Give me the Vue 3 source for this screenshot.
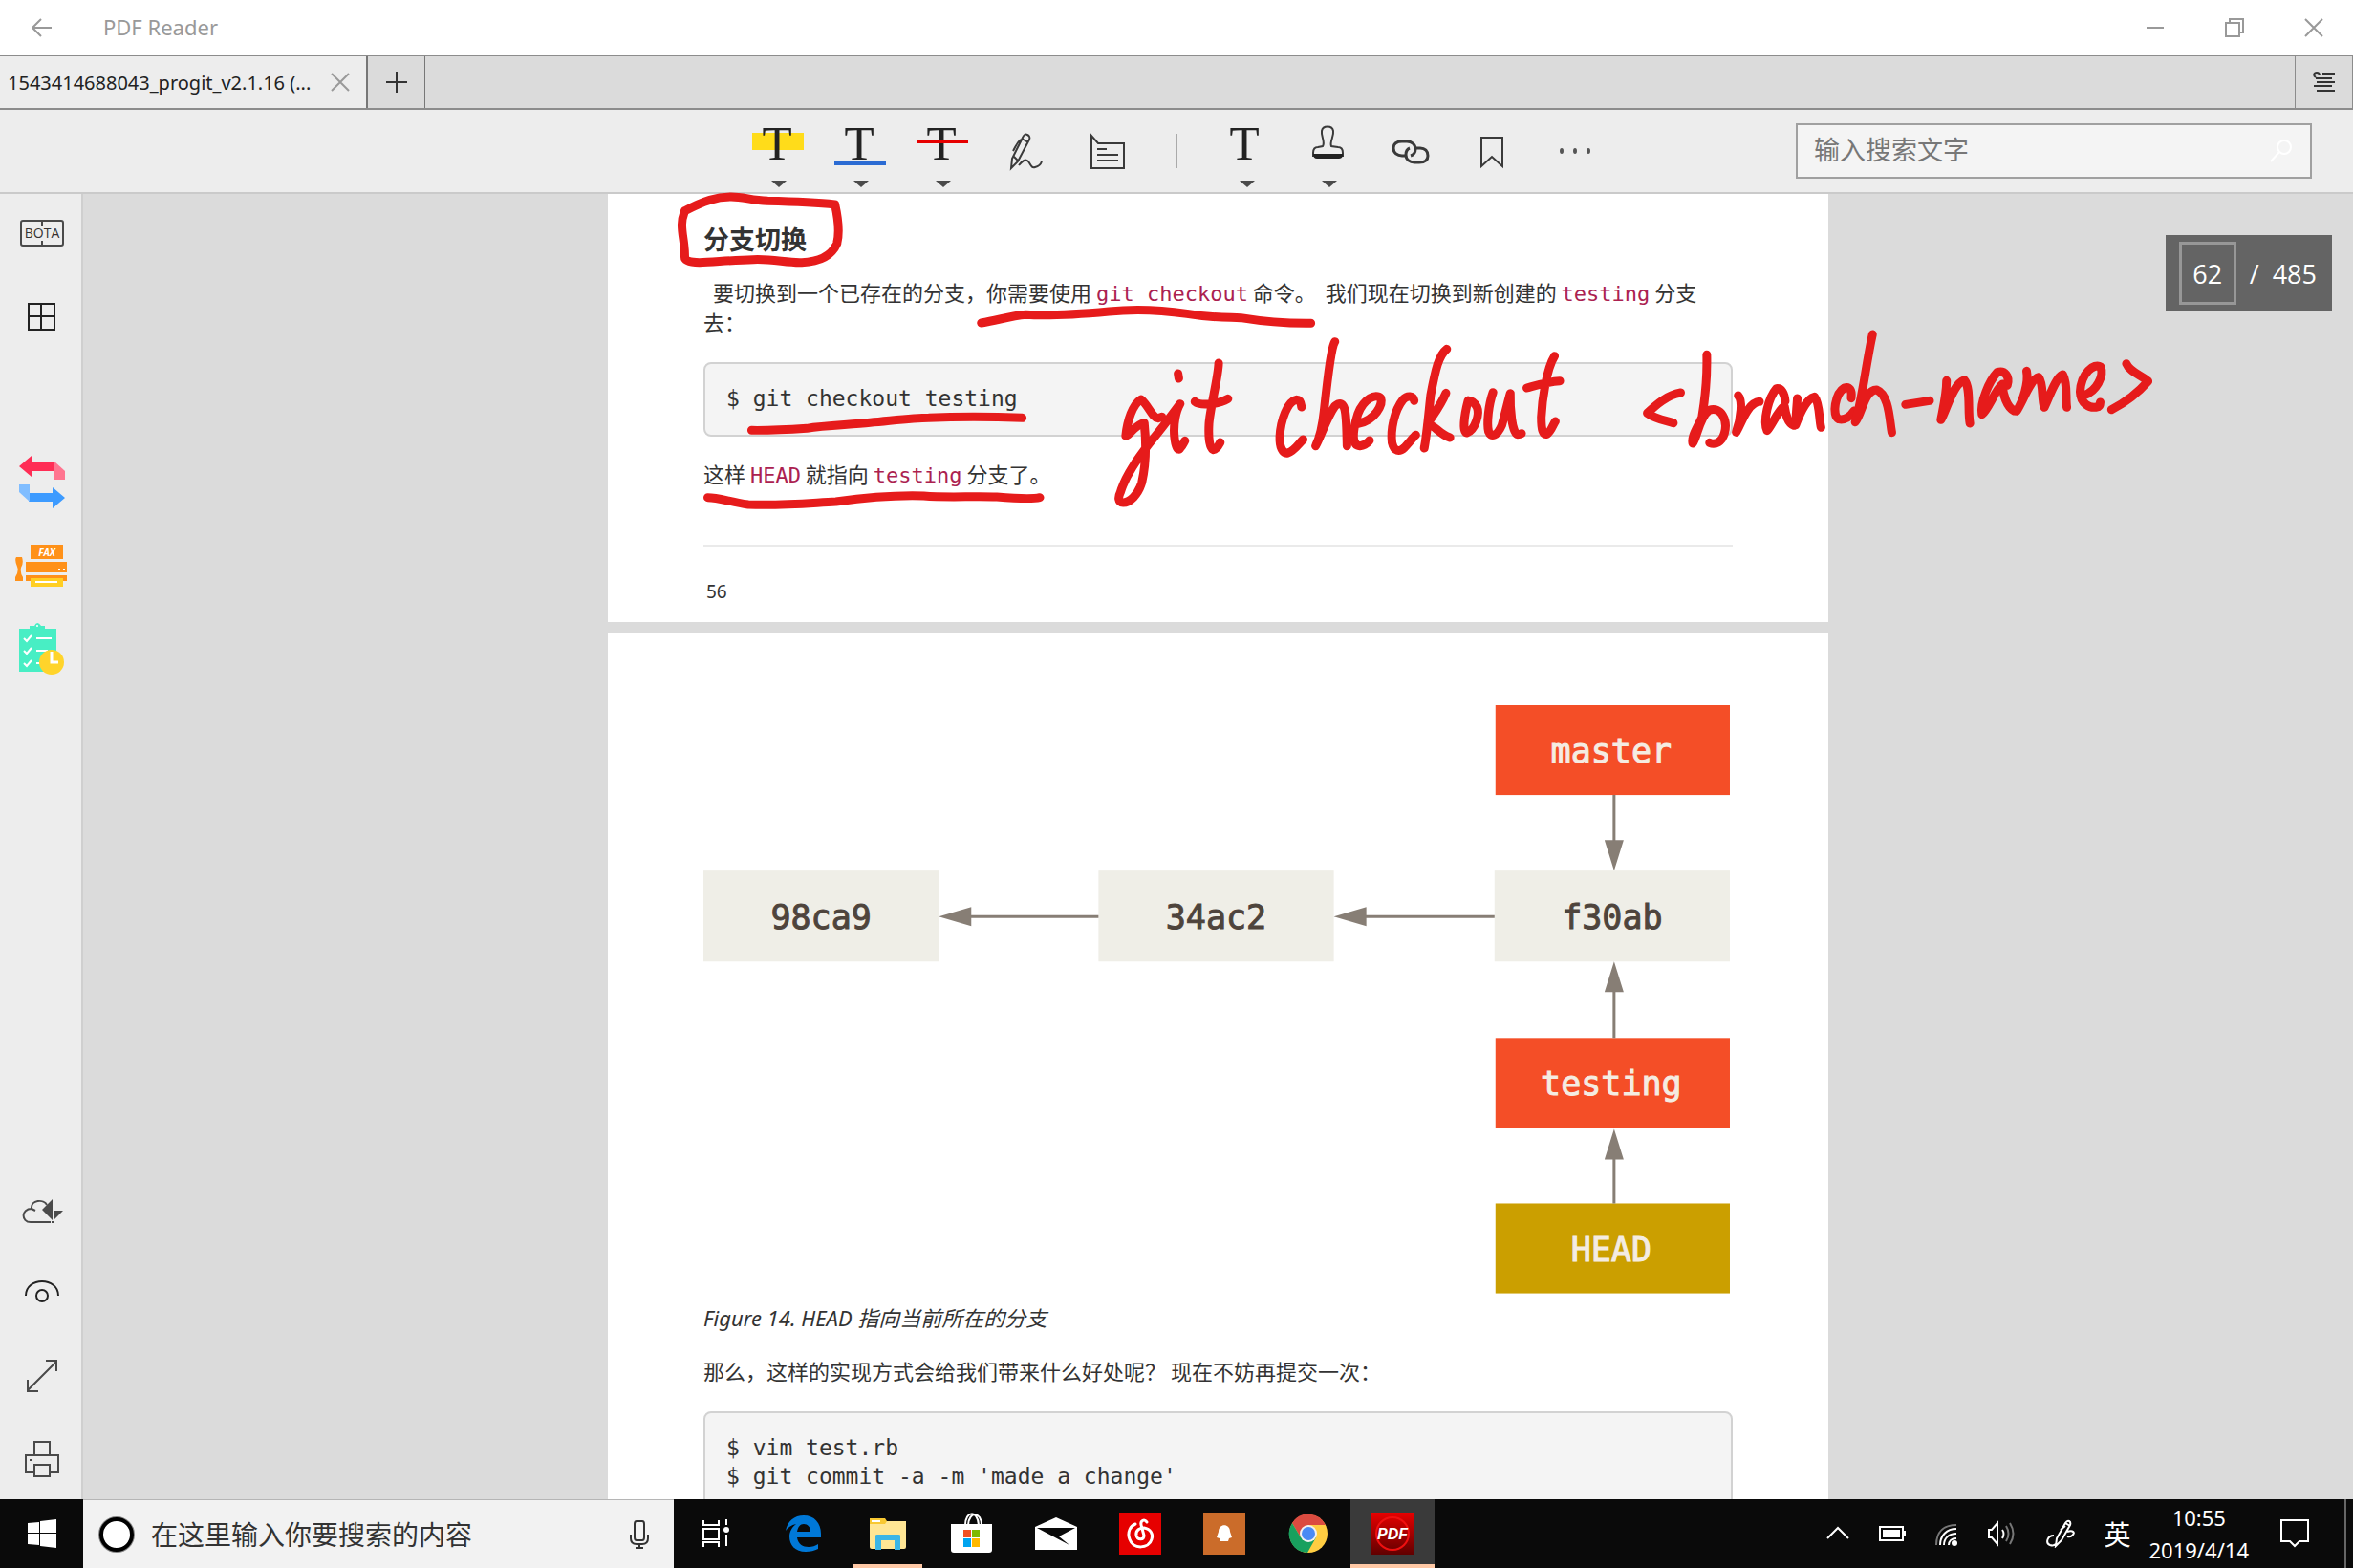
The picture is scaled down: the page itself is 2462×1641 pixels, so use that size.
<script setup>
import { ref } from 'vue'

const query = ref('')
const desktopQuery = ref('')
const pageNumber = ref('62')

const commits = [
  { id: '98ca9', x: 0 },
  { id: '34ac2', x: 413 },
  { id: 'f30ab', x: 827 },
]
const refs = [
  { name: 'master', y: 0, fill: '#f44e27' },
  { name: 'testing', y: 348, fill: '#f44e27' },
  { name: 'HEAD', y: 521, fill: '#cb9f00' },
]
</script>

<template>
  <div class="screen">
    <header class="titlebar">
      <button class="back" aria-label="Back">
        <svg width="22" height="20" viewBox="0 0 22 20"><path d="M1 10H21M10 1L1 10L10 19" /></svg>
      </button>
      <h1>PDF Reader</h1>
      <div class="window-buttons">
        <button aria-label="Minimize"><svg width="20" height="20" viewBox="0 0 20 20"><path d="M1 10H19" /></svg></button>
        <button aria-label="Restore"><svg width="20" height="20" viewBox="0 0 20 20"><path d="M1 5H15V19H1ZM5 5V1H19V15H15" /></svg></button>
        <button aria-label="Close"><svg width="20" height="20" viewBox="0 0 20 20"><path d="M1 1L19 19M19 1L1 19" /></svg></button>
      </div>
    </header>

    <nav class="tabs">
      <div class="tab">
        <span>1543414688043_progit_v2.1.16 (...</span>
        <button aria-label="Close tab"><svg width="20" height="20" viewBox="0 0 20 20"><path d="M1 1L19 19M19 1L1 19" /></svg></button>
      </div>
      <button class="new-tab" aria-label="New tab"><svg width="22" height="22" viewBox="0 0 22 22"><path d="M0 11H22M11 0V22" /></svg></button>
      <button class="tab-menu" aria-label="Tab menu">
        <svg width="24" height="22" viewBox="0 0 24 22"><path d="M3 6C0 4 1 1 4 1C6 1 7 2 7 4M10 2H23M3 7H20M4 11H23M1 15H20M4 20H23" /></svg>
      </button>
    </nav>

    <div class="toolbar">
      <div></div>
      <div class="tools">
        <button aria-label="Highlight">
          <svg viewBox="0 0 86 86"><rect x="16" y="24" width="54" height="18" fill="#ffdc1a" /><text x="42" y="52">T</text><path class="caret" d="M36 74H52L44 81Z" /></svg>
        </button>
        <button aria-label="Underline">
          <svg viewBox="0 0 86 86"><text x="42" y="52">T</text><rect x="16" y="54" width="54" height="4" fill="#2b6bd3" /><path class="caret" d="M36 74H52L44 81Z" /></svg>
        </button>
        <button aria-label="Strikethrough">
          <svg viewBox="0 0 86 86"><text x="42" y="52">T</text><rect x="16" y="31" width="54" height="4" fill="#e60000" /><path class="caret" d="M36 74H52L44 81Z" /></svg>
        </button>
        <button aria-label="Freehand">
          <svg viewBox="0 0 86 86"><path class="ico" d="M29 61L30 51L41 29C42 26 44 25 46 26C48 27 49 29 48 31L36 54L29 61ZM40 30L47 34M32 49L36 53M39 31C35 34 34 38 31 43M37 58C41 53 44 51 47 54C50 58 50 61 54 60C58 59 60 57 61 54" /></svg>
        </button>
        <button aria-label="Note">
          <svg viewBox="0 0 86 86"><path class="ico" d="M27 61V27L34 35H61V61ZM33 41H43M33 47H55M33 53H55" /></svg>
        </button>
        <span class="rule"></span>
        <button aria-label="Text box">
          <svg viewBox="0 0 86 86"><text x="41" y="52">T</text><path class="caret" d="M36 74H52L44 81Z" /></svg>
        </button>
        <button aria-label="Stamp">
          <svg viewBox="0 0 86 86"><path class="ico" d="M37 38C40 33 35 28 36 22C37 16 47 16 48 22C49 28 44 33 46 38L53 39C56 39 58 41 58 45V48H27V45C27 41 29 39 32 39Z" /><path fill="#222" d="M27 46H58V48Q57 51 54 51H31Q27 51 27 46Z" /><path class="caret" d="M36 74H52L44 81Z" /></svg>
        </button>
        <button aria-label="Link">
          <svg viewBox="0 0 86 86"><g class="ico link"><path d="M38 48H34C29 48 25 45 25 40S29 33 34 33H39C44 33 48 36 48 41C48 44 46 47 43 48" /><path d="M48 40H53C58 40 61 43 61 48S57 55 52 55H47C42 55 38 52 38 47C38 44 39 41 42 40" /></g></svg>
        </button>
        <button aria-label="Bookmark">
          <svg viewBox="0 0 86 86"><path class="ico" d="M31 29H53V59L42 49L31 59Z" /></svg>
        </button>
        <button aria-label="More">
          <svg viewBox="0 0 86 86"><g fill="#555"><ellipse cx="29" cy="43" rx="2" ry="3" /><ellipse cx="43" cy="43" rx="2" ry="3" /><ellipse cx="57" cy="43" rx="2" ry="3" /></g></svg>
        </button>
      </div>
      <label class="search">
        <input v-model="query" type="text" aria-label="输入搜索文字" placeholder="输入搜索文字" />
        <svg width="24" height="24" viewBox="0 0 24 24"><circle cx="15" cy="8" r="7" /><path d="M10 13L1 23" /></svg>
      </label>
    </div>

    <div class="workspace">
      <aside class="sidebar">
        <div class="side-group">
          <button aria-label="BOTA">
            <svg width="46" height="56" viewBox="0 0 46 56"><path class="thin" d="M3 15H43Q45 15 45 17V39Q45 41 43 41H3Q1 41 1 39V17Q1 15 3 15ZM23 15V20M23 36V41" /><text x="23" y="33">BOTA</text></svg>
          </button>
          <button aria-label="Thumbnails">
            <svg width="30" height="56" viewBox="0 0 30 56"><path class="thin bold" d="M1 15H28V42H1ZM14 15V42M1 28H28" /></svg>
          </button>
        </div>
        <div class="side-group colored">
          <button aria-label="Convert">
            <svg width="48" height="56" viewBox="0 0 48 56">
              <path fill="#ff2d55" d="M0 11L13 0V6H37L41 16H13V22Z" /><path fill="#ff7590" d="M37 6L48 16V25H37Z" />
              <path fill="#3d9bff" d="M48 44L35 33V39H10V48H35V55Z" /><path fill="#80bdff" d="M0 30H11V48L0 38Z" />
            </svg>
          </button>
          <button aria-label="Fax">
            <svg width="56" height="56" viewBox="0 0 56 56">
              <path fill="#ff9119" d="M16 6H50V21H16ZM11 24H54V35H11ZM11 38H54V44H11ZM1 19H7Q9 25 6 30Q5 36 8 40V44H0V40Q4 34 2 29Q-1 22 1 19Z" />
              <path fill="#ffcf24" d="M16 41H50V50H16Z" /><path stroke="#fff" stroke-width="2" d="M21 45H44M45 32H47M50 32H52" />
              <text x="33" y="18" class="fax">FAX</text>
            </svg>
          </button>
          <button aria-label="Tasks">
            <svg width="48" height="56" viewBox="0 0 48 56">
              <path fill="#48eec4" d="M0 7H11V4H16Q19-2 23 4H27V7H39V52H0Z" /><circle cx="19" cy="4" r="1" fill="#fff" />
              <path fill="none" stroke="#fff" stroke-width="2" d="M5 17L8 20L13 14M5 30L8 33L13 27M5 43L8 46L13 40M18 17H34M18 30H30M18 43H24" />
              <circle cx="34" cy="42" r="13" fill="#ffd42b" /><path fill="none" stroke="#fff" stroke-width="3" d="M34 31V42H41" />
            </svg>
          </button>
        </div>
        <div class="side-group bottom">
          <button aria-label="Cloud">
            <svg width="44" height="44" viewBox="0 0 44 44"><path class="thin" d="M31 35H10C0 35 0 21 11 21C10 11 24 11 27 17M11 21L15 23" /><path fill="#4a4a4a" d="M22 22L33 11V33ZM34 23H44L34 33ZM32 34H35V36H32Z" /></svg>
          </button>
          <button aria-label="View">
            <svg width="38" height="44" viewBox="0 0 38 44"><path class="thin bold" d="M2 25C2 5 36 5 36 25" /><circle class="thin bold" cx="19" cy="25" r="6" /></svg>
          </button>
          <button aria-label="Full screen">
            <svg width="34" height="44" viewBox="0 0 34 44"><path class="thin" d="M2 37L32 7M21 6H32V17M2 26V38H13" /></svg>
          </button>
          <button aria-label="Print">
            <svg width="38" height="44" viewBox="0 0 38 44"><path class="thin" d="M11 18V4H27V18M10 36H2V18H36V36H28M11 28H27V40H11ZM6 23H8" /></svg>
          </button>
        </div>
      </aside>

      <main class="viewer">
        <article class="sheet first">
          <h2>分支切换</h2>
          <p class="lead">要切换到一个已存在的分支，你需要使用 <code>git checkout</code> 命令。&nbsp; 我们现在切换到新创建的 <code>testing</code> 分支<br />去：</p>
          <pre>$ git checkout testing</pre>
          <p>这样 <code>HEAD</code> 就指向 <code>testing</code> 分支了。</p>
          <footer>56</footer>

          <svg class="ink" viewBox="0 0 1277 448" role="img" aria-label="git checkout &lt;branch-name&gt;">
            <svg x="4" y="-3" width="800" height="460" viewBox="0 0 1568 1380" preserveAspectRatio="none">
              <path d="M150 62C190 30 215 18 245 18C270 18 285 28 320 31C370 33 420 36 458 42C465 90 468 130 462 165C452 200 430 222 390 224C360 226 330 212 290 215C250 217 210 222 180 224C160 224 150 218 150 208C150 160 144 140 144 105C144 85 147 75 150 62" />
              <path d="M758 414C800 402 820 392 850 388C900 393 970 385 1020 378C1080 368 1130 374 1180 385C1230 398 1260 396 1290 398C1330 408 1380 416 1434 415" />
              <path d="M287 751C330 752 370 748 400 745C440 735 490 734 530 727C580 720 620 712 650 712C720 707 780 708 842 712" />
              <path d="M197 962C220 962 240 975 280 984C350 988 400 980 460 975C540 958 600 955 640 957C690 963 740 957 790 960C830 965 860 968 878 962" />
            </svg>
            <svg x="504" y="117" width="660" height="230" viewBox="0 0 1568 690" preserveAspectRatio="none">
              <path d="M180 349L170 353C155 350 145 310 128 294C107 310 94 360 90 408C97 410 115 372 136 368C142 440 140 500 130 555C120 595 100 618 84 618C70 617 71 600 77 585C90 530 120 480 150 430C180 385 215 325 225 308C215 330 208 370 211 410C213 440 220 460 226 446C232 438 234 430 237 424" />
              <path d="M220 213L222 228" />
              <path d="M321 180C320 225 300 320 297 370C295 415 298 448 308 452C318 450 322 435 325 429M262 301C275 315 320 310 344 292" />
              <path d="M527 318C525 300 522 295 514 295C492 300 475 360 473 410C472 445 480 465 493 462C508 458 522 430 531 420" />
              <path d="M610 113C600 130 590 250 583 330C578 390 570 420 562 440C575 410 590 350 610 315C640 285 638 350 640 440" />
              <path d="M668 370C710 360 730 310 724 290C712 275 682 290 667 340C652 400 652 438 672 440C688 438 692 428 696 423" />
              <path d="M807 298C805 283 790 280 779 295C757 330 748 390 752 430C757 458 770 460 783 445C795 430 805 412 811 406" />
              <path d="M888 136C868 155 860 200 848 280C842 350 838 410 832 447M886 274C870 320 850 350 840 372C860 375 865 400 896 414" />
              <path d="M941 298C930 350 927 397 938 399C958 390 971 340 963 318C955 300 947 298 941 298" />
              <path d="M1003 272C992 310 987 370 992 395C998 415 1013 410 1025 375C1035 330 1042 290 1046 275C1045 320 1050 400 1064 404C1072 404 1072 402 1074 401" />
              <path d="M1156 158C1135 200 1125 300 1123 350C1123 390 1127 406 1137 403C1148 395 1153 370 1158 363M1087 258C1110 250 1140 238 1169 236" />
            </svg>
            <svg x="1024" y="117" width="660" height="230" viewBox="0 0 1568 690" preserveAspectRatio="none">
              <path d="M234 273C200 280 172 312 151 337C170 355 195 360 216 368" />
              <path d="M299 154C300 210 295 290 287 350C275 385 260 410 264 432C275 415 280 350 305 328C335 315 352 360 343 400C337 428 320 438 306 430" />
              <path d="M377 282C388 296 385 350 372 397C385 370 400 305 430 301" />
              <path d="M494 300C492 275 485 258 472 260C452 290 438 360 449 392C460 378 475 330 492 315C495 340 500 370 516 376" />
              <path d="M524 291C522 330 520 350 520 374C530 340 545 293 567 286C580 305 578 360 583 382" />
              <path d="M658 290C661 265 653 252 641 258C618 275 609 345 627 356C643 360 654 350 665 330" />
              <path d="M711 90C695 180 685 300 668 365C685 340 690 265 721 264C753 280 753 360 759 398" />
              <path d="M793 310L853 298" />
              <path d="M895 235C895 280 885 330 881 358C895 330 910 245 939 233C956 256 947 330 953 369" />
              <path d="M1046 250C1053 220 1039 202 1021 209C1002 235 978 300 983 341C1000 325 1015 265 1034 246C1035 280 1045 318 1063 330" />
              <path d="M1094 205C1100 240 1085 300 1069 331C1085 300 1105 228 1124 224C1137 245 1130 290 1138 319C1150 290 1165 226 1184 216C1197 245 1190 290 1194 319" />
              <path d="M1237 281C1268 268 1287 220 1278 192C1262 178 1229 212 1227 270C1228 306 1250 325 1272 317C1278 313 1276 306 1277 303" />
              <path d="M1342 182C1350 207 1378 217 1396 237C1378 263 1350 297 1305 326" />
            </svg>
          </svg>
        </article>

        <article class="sheet second">
          <figure>
            <svg viewBox="0 0 1076 616">
              <g v-for="c in commits" :key="c.id">
                <rect :x="c.x" y="173" width="246" height="95" fill="#efeee7" />
                <text :x="c.x + 123" y="234" class="commit">{{ c.id }}</text>
              </g>
              <g v-for="r in refs" :key="r.name">
                <rect x="828" :y="r.y" width="245" height="94" :fill="r.fill" />
                <text x="949" :y="r.y + 60" class="branch">{{ r.name }}</text>
              </g>
              <path class="line" d="M413 221H270M827 221H685M952 94V150M952 348V295M952 521V470" />
              <path class="tip" d="M246 221L280 211V231ZM659 221L693 211V231ZM952 173L942 141H962ZM952 268L942 300H962ZM952 443L942 475H962Z" />
            </svg>
            <figcaption>Figure 14. HEAD 指向当前所在的分支</figcaption>
          </figure>
          <p>那么，这样的实现方式会给我们带来什么好处呢？ 现在不妨再提交一次：</p>
          <pre>$ vim test.rb
$ git commit -a -m 'made a change'</pre>
        </article>

        <div class="pager">
          <input v-model="pageNumber" type="text" aria-label="Page" />
          <span>/</span><span>485</span>
        </div>
      </main>
    </div>

    <footer class="taskbar">
      <button class="start" aria-label="Start">
        <svg width="30" height="30" viewBox="0 0 30 30"><path fill="#fff" d="M0 4L12 3V14H0ZM13 2L30 0V14H13ZM0 15H12V27L0 26ZM13 15H30V30L13 28Z" /></svg>
      </button>
      <label class="cortana">
        <svg width="40" height="40" viewBox="0 0 40 40"><circle cx="20" cy="20" r="18" fill="#fff" stroke="#888" stroke-width="2" /><circle cx="20" cy="20" r="16" fill="none" stroke="#000" stroke-width="4" /></svg>
        <input v-model="desktopQuery" type="text" aria-label="在这里输入你要搜索的内容" placeholder="在这里输入你要搜索的内容" />
        <svg width="20" height="30" viewBox="0 0 20 30"><path fill="none" stroke="#333" stroke-width="2" d="M7 1H13Q15 1 15 4V18Q15 21 13 21H7Q5 21 5 18V4Q5 1 7 1ZM1 15V19Q1 25 7 25H13Q19 25 19 19V15M10 25V29M6 29H14" /></svg>
      </label>
      <div class="apps">
        <button class="task-view" aria-label="Task view">
          <svg width="30" height="30" viewBox="0 0 30 30"><path fill="none" stroke="#fff" stroke-width="2" d="M2 1V6H18V1M2 10H18V21H2ZM2 29V24H18V29M26 0V6M26 16V28" /><circle cx="26" cy="11" r="3" fill="#fff" /></svg>
        </button>
        <button aria-label="Edge">
          <svg width="44" height="44" viewBox="0 0 44 44"><path fill="#0078d7" d="M3 19C5 9 12 3 22 3C33 3 40 11 40 22V26H15C16 33 21 36 27 36C31 36 34 35 37 33V38C33 40 29 41 24 41C13 41 7 34 7 25C7 20 10 15 14 12C9 13 5 16 3 19ZM15 20H29C29 15 26 12 22 12C18 12 16 15 15 20Z" /></svg>
        </button>
        <button aria-label="Explorer" class="running">
          <svg width="44" height="44" viewBox="0 0 44 44"><path fill="#ffe694" d="M3 9H41V36Q41 38 39 38H5Q3 38 3 36Z" /><path fill="#f8c832" d="M3 6H19L21 9L19 12H3Z" /><path fill="#fff" d="M5 8H14V10H5Z" /><path fill="#3bb5e6" d="M9 24Q9 23 11 23H33Q35 23 35 24V39H29V29H15V39H9Z" /></svg>
        </button>
        <button aria-label="Store">
          <svg width="44" height="44" viewBox="0 0 44 44"><path fill="#fff" d="M0 12H43V39Q43 42 40 42H3Q0 42 0 39Z" /><path fill="none" stroke="#fff" stroke-width="2" d="M15 13C15-2 28-3 29 13M18 13C19-2 32-1 32 13" /><path fill="#f25022" d="M13 18H21V26H13Z" /><path fill="#7fba00" d="M22 18H30V26H22Z" /><path fill="#00a4ef" d="M13 27H21V36H13Z" /><path fill="#ffb900" d="M22 27H30V36H22Z" /></svg>
        </button>
        <button aria-label="Mail">
          <svg width="44" height="44" viewBox="0 0 44 44"><path fill="#fff" d="M0 15L22 5L44 15V39H0Z" /><path fill="#0a0a0a" d="M2 16H42L25 25L36 34Z" /></svg>
        </button>
        <button aria-label="Music">
          <svg width="44" height="44" viewBox="0 0 44 44"><path fill="#e60000" d="M0 0H44V44H0Z" /><path fill="none" stroke="#fff" stroke-width="3" stroke-linecap="round" d="M29 10C26 6 22 9 23 13L26 24C26 29 19 29 18 24C17 18 22 16 26 16C33 17 36 23 34 28C31 38 15 39 11 28C8 20 12 14 17 12" /></svg>
        </button>
        <button aria-label="Chat">
          <svg width="44" height="44" viewBox="0 0 44 44"><path fill="#cb6c2a" d="M0 0H44V44H0Z" /><path fill="#fff" d="M16 20C16 11 28 11 28 20L30 26L27 27L26 30H18L17 27L14 26Z" /></svg>
        </button>
        <button aria-label="Chrome">
          <svg width="44" height="44" viewBox="0 0 44 44"><circle cx="22" cy="22" r="20" fill="#ffcd42" /><path fill="#db4b40" d="M5 11A20 20 0 0 1 40 13H22L14 26Z" /><path fill="#18a05e" d="M5 11A20 20 0 0 0 21 42L30 26L14 26Z" /><circle cx="22" cy="22" r="9" fill="#f1f1f1" /><circle cx="22" cy="22" r="7" fill="#4a8af4" /></svg>
        </button>
        <button aria-label="PDF" class="running active">
          <svg width="44" height="44" viewBox="0 0 44 44"><defs><linearGradient id="pdf" x2="0" y2="1"><stop stop-color="#e80000" /><stop offset="1" stop-color="#600000" /></linearGradient></defs><path fill="url(#pdf)" d="M0 0H44V44H0Z" /><circle cx="22" cy="22" r="17" fill="none" stroke="#f01010" stroke-width="2" /><text x="22" y="28">PDF</text></svg>
        </button>
      </div>
      <div class="tray">
        <svg width="24" height="30" viewBox="0 0 24 30"><path d="M1 20L12 9L23 20" /></svg>
        <svg width="28" height="30" viewBox="0 0 28 30"><path d="M1 8H25V22H1ZM27 12V18" /><path class="solid" d="M4 11H22V19H4Z" /></svg>
        <svg width="24" height="30" viewBox="0 0 24 30"><g class="dim"><path d="M1 27C1 13 9 6 22 6" /></g><path d="M5 27C5 17 12 10 22 10M9 27C9 20 14 15 22 15M14 27C14 23 17 20 22 20" /><circle class="solid" cx="20" cy="25" r="3" /></svg>
        <svg width="30" height="30" viewBox="0 0 30 30"><path d="M1 11H4L10 4V26L4 19H1ZM15 11Q18 15 15 20" /><g class="dim"><path d="M19 7Q24 15 19 23M23 4Q30 15 23 26" /></g></svg>
        <svg width="30" height="30" viewBox="0 0 30 30"><path d="M10 28L11 20L20 4Q22 1 24 2Q26 3 25 6L16 22ZM20 4L25 7M20 7L15 11M8 17C1 17-1 25 4 27C7 28 9 27 10 26M22 13C28 11 31 14 27 17C25 19 22 18 22 18" /></svg>
        <span class="lang">英</span>
        <time class="clock"><span>10:55</span><span>2019/4/14</span></time>
        <svg width="30" height="30" viewBox="0 0 30 30"><path d="M1 1H29V23H20L15 28L10 23H1Z" /></svg>
      </div>
    </footer>
  </div>
</template>

<style>
body {
  margin: 0;
}
</style>

<style scoped>
.screen {
  display: flex;
  flex-direction: column;
  height: 100vh;
  overflow: hidden;
  font-family: "Noto Sans", "Noto Sans CJK SC", sans-serif;
  background: #dbdbdb;
  color: #333;
}
button {
  display: flex;
  align-items: center;
  justify-content: center;
  padding: 0;
  border: 0;
  background: none;
  font: inherit;
  color: inherit;
}
input {
  box-sizing: border-box;
  min-width: 0;
  padding: 0;
  border: 0;
  outline: 0;
  background: none;
  font: inherit;
  color: inherit;
}
svg {
  display: block;
  flex: none;
}

.titlebar {
  display: flex;
  align-items: center;
  height: 58px;
  background: #fff;
}
.titlebar svg {
  fill: none;
  stroke: #999;
  stroke-width: 2;
}
.back {
  width: 87px;
  height: 58px;
}
.titlebar h1 {
  flex: 1;
  margin: 0 0 0 21px;
  padding-bottom: 2px;
  font-size: 22px;
  font-weight: 400;
  color: #999;
}
.window-buttons {
  display: flex;
}
.window-buttons button {
  width: 83px;
  height: 58px;
}

.tabs {
  display: flex;
  box-sizing: border-box;
  height: 57px;
  border: solid #8c8c8c;
  border-width: 1px 1px 2px 0;
}
.tab {
  display: flex;
  align-items: center;
  justify-content: space-between;
  box-sizing: border-box;
  width: 385px;
  padding: 0 17px 0 8px;
  border-right: 2px solid #777;
  background: #ededed;
  font-size: 20px;
  color: #222;
  white-space: nowrap;
}
.tab svg {
  fill: none;
  stroke: #999;
  stroke-width: 2;
}
.new-tab {
  width: 60px;
  border-right: 1px solid #777;
}
.new-tab svg,
.tab-menu svg {
  fill: none;
  stroke: #333;
  stroke-width: 2;
}
.tab-menu {
  width: 60px;
  margin-left: auto;
  border-left: 1px solid #8c8c8c;
}

.toolbar {
  display: grid;
  grid-template-columns: 1fr auto 1fr;
  align-items: center;
  height: 86px;
  border-bottom: 2px solid #cacaca;
  background: #ededed;
}
.tools {
  display: flex;
  align-items: center;
}
.tools svg {
  width: 86px;
  height: 86px;
}
.tools text {
  font: 51px "Liberation Serif", serif;
  text-anchor: middle;
  fill: #222;
}
.caret {
  fill: #4a4a4a;
}
.ico {
  fill: none;
  stroke: #3a3a3a;
  stroke-width: 2;
}
.link {
  stroke-width: 3;
}
.rule {
  width: 2px;
  height: 36px;
  margin: 0 29px;
  background: #aaa;
}
.search {
  display: flex;
  align-items: center;
  justify-self: end;
  box-sizing: border-box;
  width: 540px;
  height: 58px;
  margin-right: 43px;
  padding: 0 18px 0 17px;
  border: 2px solid #a0a0a0;
  background: #f4f4f4;
  font: 27px "Noto Sans CJK SC", sans-serif;
}
.search input {
  flex: 1;
  padding-bottom: 5px;
}
.search input::placeholder {
  color: #777;
  opacity: 1;
}
.search svg {
  fill: none;
  stroke: #fff;
  stroke-width: 2;
}

.workspace {
  display: flex;
  flex: 1;
  min-height: 0;
}
.sidebar {
  display: flex;
  flex-direction: column;
  box-sizing: border-box;
  width: 87px;
  padding-bottom: 20px;
  box-shadow: inset -2px 0 #cfcfcf;
  background: #ededed;
}
.side-group {
  display: flex;
  flex-direction: column;
  align-items: center;
  gap: 31px;
  padding-top: 13px;
}
.colored {
  padding-top: 118px;
}
.bottom {
  gap: 43px;
  margin-top: auto;
}
.sidebar text {
  font: 14px "Open Sans", sans-serif;
  text-anchor: middle;
  fill: #333;
}
.sidebar .fax {
  font: italic bold 10px "Open Sans", sans-serif;
  fill: #fff;
}
.thin {
  fill: none;
  stroke: #4a4a4a;
  stroke-width: 2;
}
.bold {
  stroke: #222;
}

.viewer {
  position: relative;
  display: flex;
  flex: 1;
  flex-direction: column;
  align-items: center;
  gap: 11px;
  min-width: 0;
}
.sheet {
  position: relative;
  box-sizing: border-box;
  flex: none;
  width: 54%;
  max-width: 1277px;
  padding: 0 100px;
  background: #fff;
  font: 22px/31px "Noto Sans CJK SC", sans-serif;
}
.first {
  height: 448px;
  padding-top: 31px;
}
.second {
  padding-top: 76px;
  padding-bottom: 76px;
}
.sheet h2 {
  margin: 0 0 24px;
  font-size: 27px;
  line-height: 32px;
}
.sheet p {
  margin: 0 0 27px;
}
.lead {
  text-indent: 10px;
}
code {
  font: 22px "DejaVu Sans Mono", monospace;
  line-height: 1;
  color: #ab2150;
}
pre {
  margin: 0 0 23px;
  padding: 21px 22px 23px;
  border: 2px solid #d2d2d2;
  border-radius: 8px;
  background: #f4f4f4;
  font: 23px/30px "DejaVu Sans Mono", monospace;
}
.sheet footer {
  margin-top: 59px;
  padding: 32px 3px 0;
  border-top: 2px solid #eaeaea;
  font: 19px/31px "Noto Sans", sans-serif;
}
.ink {
  position: absolute;
  top: 0;
  left: 0;
  z-index: 2;
  width: 100%;
  overflow: visible;
  pointer-events: none;
}
.ink svg {
  overflow: visible;
}
.ink path {
  fill: none;
  stroke: #e61b1b;
  stroke-width: 9;
  stroke-linecap: round;
  stroke-linejoin: round;
  vector-effect: non-scaling-stroke;
}
figure {
  margin: 0 0 24px;
}
figure svg {
  width: 100%;
}
figure text {
  font: 35px "DejaVu Sans Mono", monospace;
  text-anchor: middle;
  stroke-width: 1;
}
figure .commit {
  fill: #4e443c;
  stroke: #4e443c;
}
figure .branch {
  fill: #f4ece2;
  stroke: #f4ece2;
}
.line {
  fill: none;
  stroke: #877e75;
  stroke-width: 3;
}
.tip {
  fill: #877e75;
}
figcaption {
  margin-top: 9px;
  font-family: "Noto Sans", "Noto Sans CJK SC", sans-serif;
  font-style: italic;
}
.pager {
  position: absolute;
  top: 43px;
  right: 22px;
  display: flex;
  align-items: center;
  box-sizing: border-box;
  height: 80px;
  padding: 0 16px 0 14px;
  gap: 14px;
  background: #646464;
  color: #fff;
  font: 27px "Open Sans", sans-serif;
}
.pager input {
  width: 60px;
  height: 66px;
  border: 3px solid #979797;
  text-align: center;
}

.taskbar {
  display: flex;
  height: 72px;
  background: #0a0a0a;
  color: #fff;
  z-index: 3;
}
.start {
  width: 87px;
}
.cortana {
  display: flex;
  align-items: center;
  box-sizing: border-box;
  width: 618px;
  padding: 0 26px 0 15px;
  gap: 16px;
  border-top: 1px solid #b5b5b5;
  background: #f2f2f2;
  font: 28px "Noto Sans CJK SC", sans-serif;
}
.cortana input {
  flex: 1;
  padding-bottom: 2px;
}
.cortana input::placeholder {
  color: #333;
  opacity: 1;
}
.apps {
  display: flex;
  flex: 1;
}
.apps button {
  box-sizing: border-box;
  width: 88px;
}
.apps .task-view {
  margin-right: 4px;
}
.apps .running {
  background: linear-gradient(#ffc8a5, #ffc8a5) center bottom / 72px 4px no-repeat;
}
.apps .active {
  background: linear-gradient(#ffc8a5, #ffc8a5) center bottom / 100% 4px no-repeat #3a3a3a;
}
.apps text {
  font: italic bold 16px "Liberation Sans", sans-serif;
  text-anchor: middle;
  fill: #fff;
}
.tray {
  display: flex;
  align-items: center;
  gap: 31px;
  margin-right: 7px;
  padding-right: 37px;
  border-right: 2px solid #666;
}
.tray svg {
  fill: none;
  stroke: #fff;
  stroke-width: 2;
}
.tray .solid {
  fill: #fff;
  stroke: none;
}
.dim {
  stroke: #777;
}
.lang {
  font: 28px "Noto Sans CJK SC", sans-serif;
}
.clock {
  display: flex;
  flex-direction: column;
  align-items: center;
  margin: 0 2px 0 -12px;
  font: 22px/34px "Noto Sans", sans-serif;
}
</style>
